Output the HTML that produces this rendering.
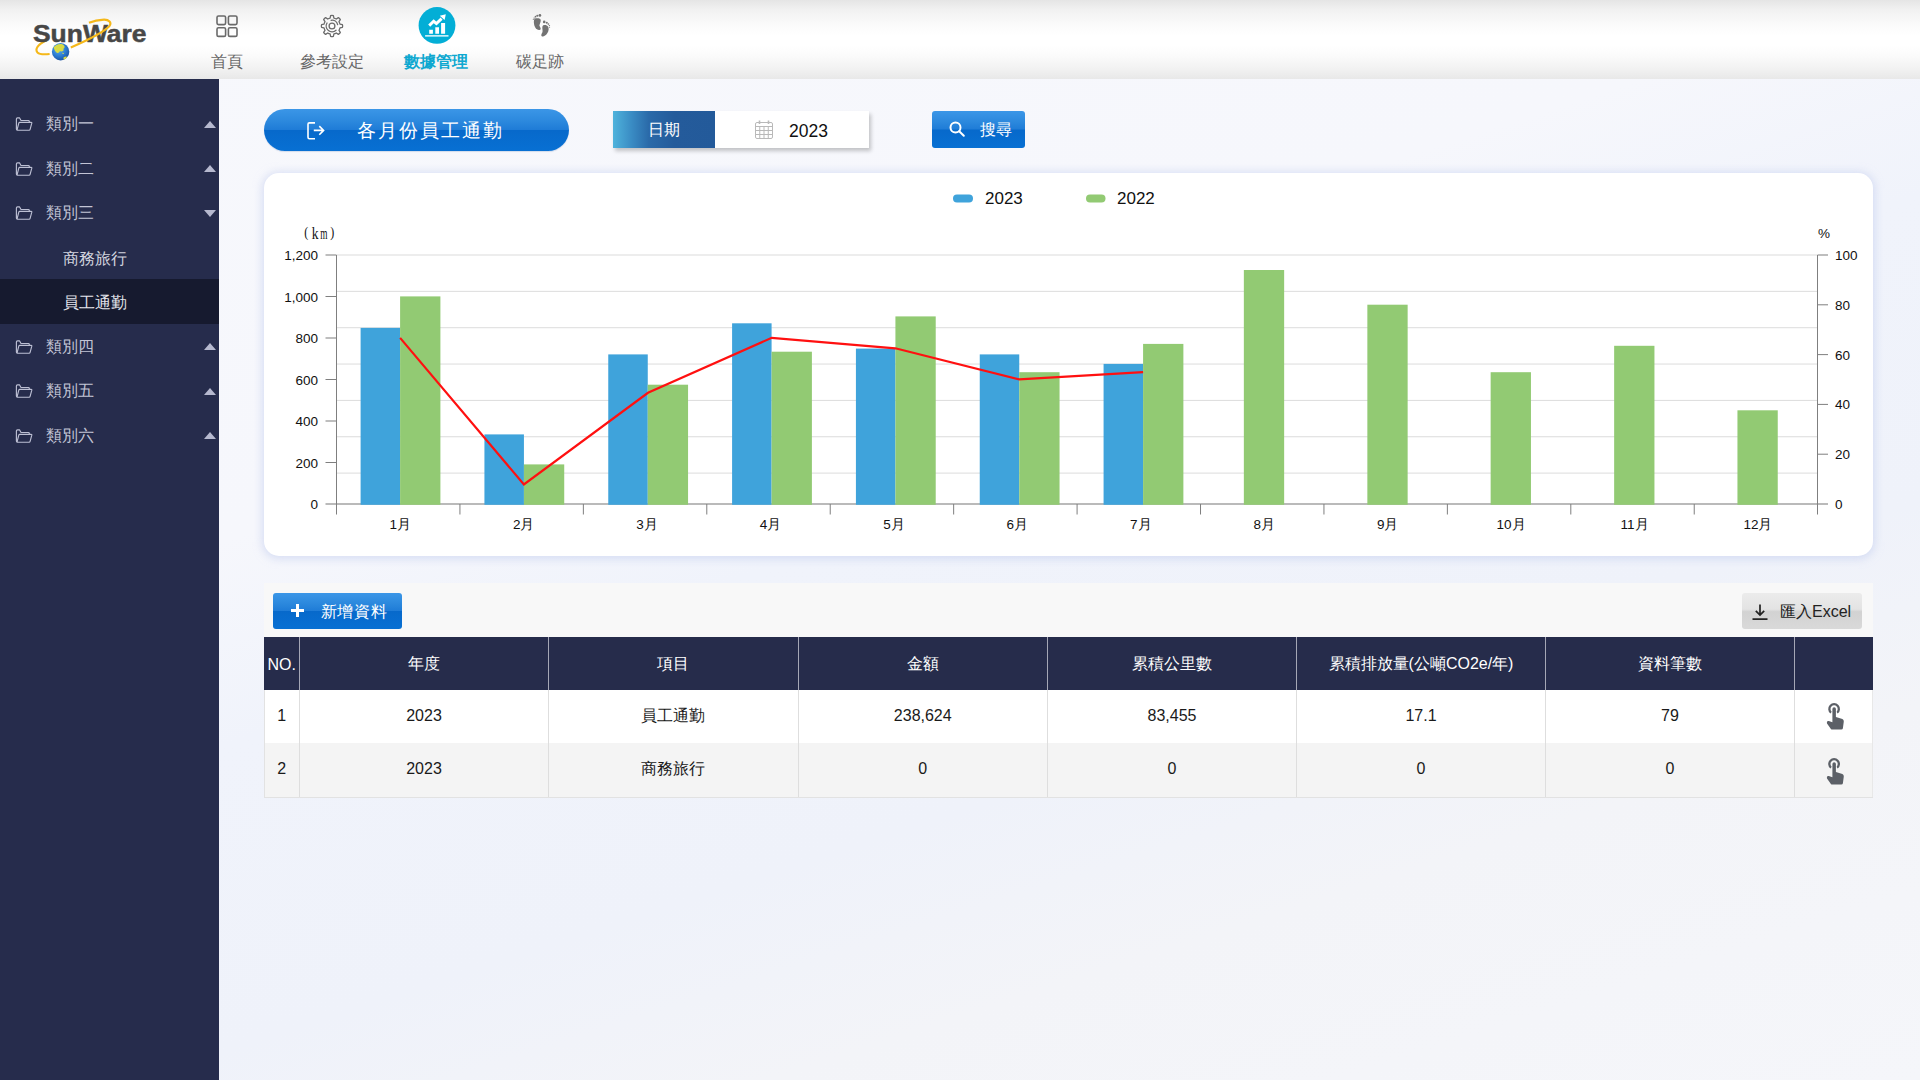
<!DOCTYPE html>
<html><head><meta charset="utf-8">
<style>
*{margin:0;padding:0;box-sizing:border-box}
html,body{width:1920px;height:1080px;overflow:hidden}
body{position:relative;font-family:"Liberation Sans",sans-serif;background:linear-gradient(162deg,#f7f8fc 0%,#f6f7fc 36%,#f0f3fb 48%,#eff2fa 66%,#f3f4f8 78%,#f5f6fa 100%)}
.abs{position:absolute}
#hdr{left:0;top:0;width:1920px;height:78.5px;background:linear-gradient(#e5e5e5 0%,#f1f1f1 12%,#fbfbfb 32%,#ffffff 45%,#ffffff 58%,#fafafa 72%,#f1f1f1 88%,#e8e8e8 100%)}
.nav{position:absolute;top:0;height:79px;text-align:center;font-size:16px;color:#666}
.nav .lbl{position:absolute;left:0;right:0;top:51px;line-height:22px;white-space:nowrap}
#side{left:0;top:78.5px;width:219.3px;height:1001.5px;background:#262c4c}
#side .it{position:absolute;left:0;width:219px;height:44.5px;color:#c2c4d5;font-size:16px}
#side .it .t{position:absolute;left:46px;top:12px;line-height:22px;white-space:nowrap}
#side .sub .t{left:63px;top:13px;color:#d2d4df}
#side .act .t{color:#e4e5ec}
#side .act{background:#161a2f}
#side .fold{position:absolute;left:15px;top:16px}
#side .tri{position:absolute;left:203.5px;top:19.5px;width:0;height:0;border-left:6px solid transparent;border-right:6px solid transparent}
#side .up{border-bottom:7px solid #b6b9cf}
#side .dn{border-top:7px solid #b6b9cf;top:20px}

.gbtn{background:linear-gradient(#3b96e7 0%,#2b88dd 30%,#1f7cd7 49%,#0769cb 51%,#0870d3 100%)}
#ttl{left:264px;top:109px;width:305px;height:42px;border-radius:21px;color:#fff;font-size:19px;box-shadow:0 1px 1px rgba(0,60,140,.15)}
#ttl .t{position:absolute;left:357px;top:10px;line-height:24px;letter-spacing:2px;white-space:nowrap}
#datebox{left:613px;top:111px;width:256px;height:37px;background:#fff;box-shadow:2px 3px 4px rgba(0,0,0,.22)}
#datelbl{left:0;top:0;width:102px;height:37px;background:linear-gradient(90deg,#4fb3dc 0%,#3a8cc4 18%,#2a6aa9 35%,#245b9b 60%,#235a9a 100%);color:#fff;font-size:16px;text-align:center;line-height:37px}
#search{left:932px;top:111px;width:93px;height:37px;border-radius:3px;color:#fff;font-size:16px}

#chartp{left:264px;top:173px;width:1609px;height:383px;background:#fff;border-radius:15px;box-shadow:0 1px 8px 2px rgba(195,205,238,.6)}

#tblp{left:264px;top:583px;width:1609px;height:214px;background:#f8f8f8}
.gbtn2{background:linear-gradient(#3b96e7 0%,#2b88dd 30%,#1f7cd7 49%,#0769cb 51%,#0870d3 100%)}
#addbtn{left:273px;top:593px;width:129px;height:36px;border-radius:3px;color:#fff;font-size:16px}
#xlsbtn{left:1742px;top:593px;width:120px;height:36px;border-radius:3px;color:#222;font-size:16px;background:linear-gradient(#ebebeb 0%,#e3e3e3 45%,#d2d2d2 52%,#d9d9d9 100%)}
.row{position:absolute;left:264px;width:1609px}
.cell{position:absolute;top:0;height:100%;text-align:center;white-space:nowrap}
.hdr{top:637px;height:52.5px;background:#262c4b;color:#fff;font-size:16px}
.hdr .cell{line-height:52.5px;top:1px;font-weight:500}
.hdr .cell:first-child{top:2px}
.r1{top:689.5px;height:53.5px;background:#fff;color:#1a1a1a;font-size:16px}
.r2{top:743px;height:53.5px;background:#f4f4f4;color:#1a1a1a;font-size:16px}
.r1 .cell,.r2 .cell{line-height:53.5px;top:-1px;font-weight:500}
.vl{position:absolute;top:0;width:1px;height:100%}
</style></head>
<body>
<div id="hdr" class="abs"></div>
<!-- logo -->
<svg class="abs" style="left:0;top:0" width="200" height="79" viewBox="0 0 200 79">
  <defs><radialGradient id="gl" cx="0.4" cy="0.35" r="0.7"><stop offset="0" stop-color="#5fb0f0"/><stop offset="0.6" stop-color="#2a7ad0"/><stop offset="1" stop-color="#1a4fa0"/></radialGradient></defs>
  <path d="M46.5 40.3 C 38 44.5, 34.5 49, 37.5 52.5 C 39.5 54.5, 45 54.5, 49.6 54" stroke="#f5b81a" stroke-width="2.1" fill="none"/>
  <text x="33" y="41.8" font-family="Liberation Sans" font-weight="bold" font-size="24.5" fill="#474747" stroke="#474747" stroke-width="0.5" textLength="113.5" lengthAdjust="spacingAndGlyphs">SunWare</text>
  <path d="M70.8 47.5 C 88 40, 104 32, 109.5 26 C 112 22.5, 109 19.5, 104 19.6 C 98 19.8, 92 21.5, 89 22.8" stroke="#f5b81a" stroke-width="2.1" fill="none"/>
  <circle cx="60.6" cy="51.7" r="8.7" fill="url(#gl)"/>
  <path d="M53.5 47.5 q3 -4 8 -3.5 q3.5 1 3 3.5 q-1.5 1 -1 3 q-2 1.5 -3.5 0.5 q-1 2.5 -3 2 q-2.5 -2 -3.5 -5.5z" fill="#d9dc45"/>
  <path d="M63.5 57.5 q2.5 -1.5 3.5 -0.5 q-1 2 -3.5 2.5z" fill="#d9dc45"/>
  <path d="M62 53 q1.5 -0.5 2 0.8 q-1 0.8 -2 -0.8z" fill="#d9dc45"/>
</svg>
<!-- nav -->
<div class="nav" style="left:197px;width:60px">
  <svg class="abs" style="left:19px;top:14.8px" width="23" height="23" viewBox="0 0 23 23" fill="none" stroke="#6a6a6a" stroke-width="1.6">
    <rect x="1" y="1" width="8.6" height="8.6" rx="1.5"/><rect x="12.4" y="1" width="8.6" height="8.6" rx="1.5"/>
    <rect x="1" y="12.8" width="8.6" height="8.6" rx="1.5"/><rect x="12.4" y="12.8" width="8.6" height="8.6" rx="1.5"/>
  </svg>
  <div class="lbl">首頁</div>
</div>
<div class="nav" style="left:292px;width:80px">
  <svg class="abs" style="left:24px;top:9.6px" width="32" height="32" viewBox="0 0 32 32" fill="none" stroke="#6a6a6a" stroke-width="1.3" stroke-linejoin="round" stroke-linecap="round">
    <path d="M14.09 8.03 L14.63 5.59 Q16.00 5.08 17.37 5.59 L17.91 8.03 A8.2 8.2 0 0 1 20.28 9.01 L22.39 7.67 Q23.72 8.28 24.33 9.61 L22.99 11.72 A8.2 8.2 0 0 1 23.97 14.09 L26.41 14.63 Q26.92 16.00 26.41 17.37 L23.97 17.91 A8.2 8.2 0 0 1 22.99 20.28 L24.33 22.39 Q23.72 23.72 22.39 24.33 L20.28 22.99 A8.2 8.2 0 0 1 17.91 23.97 L17.37 26.41 Q16.00 26.92 14.63 26.41 L14.09 23.97 A8.2 8.2 0 0 1 11.72 22.99 L9.61 24.33 Q8.28 23.72 7.67 22.39 L9.01 20.28 A8.2 8.2 0 0 1 8.03 17.91 L5.59 17.37 Q5.08 16.00 5.59 14.63 L8.03 14.09 A8.2 8.2 0 0 1 9.01 11.72 L7.67 9.61 Q8.28 8.28 9.61 7.67 L11.72 9.01 A8.2 8.2 0 0 1 14.09 8.03 Z"/>
    <circle cx="16" cy="16" r="2.9"/><path d="M15.09 10.27 A5.8 5.8 0 0 1 21.63 14.60"/><path d="M20.03 20.17 A5.8 5.8 0 0 1 11.03 13.01"/>
  </svg>
  <div class="lbl">參考設定</div>
</div>
<div class="nav" style="left:396px;width:80px">
  <svg class="abs" style="left:21px;top:5px" width="40" height="40" viewBox="0 0 40 40">
    <circle cx="20" cy="20.4" r="18.4" fill="#03aed6"/>
    <path d="M12.2 24.8h3.7v3.9h-3.7zM18.3 22.2h3.7v6.5h-3.7zM24.1 18h4v10.7h-4z" fill="#fff"/>
    <path d="M12.2 20.6 L16.7 16.3 L19.4 18.5 L24.6 13.6" stroke="#fff" stroke-width="2.9" fill="none" stroke-linejoin="miter"/>
    <path d="M22.8 10.7 L28.8 9.2 L27.6 15 Z" fill="#fff"/>
    <rect x="8.1" y="30" width="23.4" height="1.7" fill="#c9eef8"/>
  </svg>
  <div class="lbl" style="color:#0ea8d0;font-weight:bold">數據管理</div>
</div>
<div class="nav" style="left:500px;width:80px">
  <svg class="abs" style="left:26px;top:9px" width="32" height="32" viewBox="0 0 32 32" fill="#737373">
    <path d="M8.9 9.6 C11 9 13.6 8.9 14.6 10.6 C15.2 12 14 14.5 13.4 16.2 C13.2 17.2 14.9 18.6 14.7 19.9 C14.5 21 12.6 21.2 11.4 20.6 C9.5 19.5 8.1 17 7.9 13.9 C7.8 12 8 10.3 8.9 9.6 Z"/>
    <circle cx="13.9" cy="6.4" r="1.35"/><circle cx="11.3" cy="6.8" r="1.05"/><circle cx="9.5" cy="7.7" r="0.85"/><circle cx="8.1" cy="9.1" r="0.7"/><circle cx="7.3" cy="10.5" r="0.55"/>
    <path d="M17 16.4 C18.5 15.6 21 15.7 22.2 17.8 C23 19.5 22.9 22 21.1 24.6 C19.8 26.5 17.6 28 16 27.4 C14.8 26.9 15.3 25.2 16.2 23.8 C16.9 22.5 16.4 20.5 16.3 19 C16.3 17.8 16.5 16.8 17 16.4 Z"/>
    <circle cx="18.2" cy="12.9" r="1.3"/><circle cx="20.8" cy="13.7" r="1.05"/><circle cx="22.4" cy="15" r="0.85"/><circle cx="23.4" cy="16.6" r="0.7"/><circle cx="23.6" cy="18.2" r="0.55"/>
  </svg>
  <div class="lbl">碳足跡</div>
</div>

<!-- sidebar -->
<div id="side" class="abs">
<div class="it" style="top:22.60px"><svg class="fold" width="18" height="15" viewBox="0 0 18 15" fill="none" stroke="#bcbfd3" stroke-width="1.15" stroke-linejoin="round"><path d="M2.5 13.2 Q1.4 13.2 1.4 12 V2 Q1.4 0.9 2.5 0.9 H4.6 L6 3.5 H13.4 Q14.3 3.5 14.3 4.4 V5.4"/><path d="M4.8 5.4 H16.2 Q17 5.4 16.8 6.2 L15.1 12.4 Q14.9 13.2 14.1 13.2 H2.8 Q2 13.2 2.2 12.4 L3.8 6.2 Q4 5.4 4.8 5.4Z"/></svg><div class="t">類別一</div><div class="tri up"></div></div>
<div class="it" style="top:67.12px"><svg class="fold" width="18" height="15" viewBox="0 0 18 15" fill="none" stroke="#bcbfd3" stroke-width="1.15" stroke-linejoin="round"><path d="M2.5 13.2 Q1.4 13.2 1.4 12 V2 Q1.4 0.9 2.5 0.9 H4.6 L6 3.5 H13.4 Q14.3 3.5 14.3 4.4 V5.4"/><path d="M4.8 5.4 H16.2 Q17 5.4 16.8 6.2 L15.1 12.4 Q14.9 13.2 14.1 13.2 H2.8 Q2 13.2 2.2 12.4 L3.8 6.2 Q4 5.4 4.8 5.4Z"/></svg><div class="t">類別二</div><div class="tri up"></div></div>
<div class="it" style="top:111.64px"><svg class="fold" width="18" height="15" viewBox="0 0 18 15" fill="none" stroke="#bcbfd3" stroke-width="1.15" stroke-linejoin="round"><path d="M2.5 13.2 Q1.4 13.2 1.4 12 V2 Q1.4 0.9 2.5 0.9 H4.6 L6 3.5 H13.4 Q14.3 3.5 14.3 4.4 V5.4"/><path d="M4.8 5.4 H16.2 Q17 5.4 16.8 6.2 L15.1 12.4 Q14.9 13.2 14.1 13.2 H2.8 Q2 13.2 2.2 12.4 L3.8 6.2 Q4 5.4 4.8 5.4Z"/></svg><div class="t">類別三</div><div class="tri dn"></div></div>
<div class="it sub" style="top:156.16px"><div class="t">商務旅行</div></div>
<div class="it sub act" style="top:200.68px"><div class="t">員工通勤</div></div>
<div class="it" style="top:245.20px"><svg class="fold" width="18" height="15" viewBox="0 0 18 15" fill="none" stroke="#bcbfd3" stroke-width="1.15" stroke-linejoin="round"><path d="M2.5 13.2 Q1.4 13.2 1.4 12 V2 Q1.4 0.9 2.5 0.9 H4.6 L6 3.5 H13.4 Q14.3 3.5 14.3 4.4 V5.4"/><path d="M4.8 5.4 H16.2 Q17 5.4 16.8 6.2 L15.1 12.4 Q14.9 13.2 14.1 13.2 H2.8 Q2 13.2 2.2 12.4 L3.8 6.2 Q4 5.4 4.8 5.4Z"/></svg><div class="t">類別四</div><div class="tri up"></div></div>
<div class="it" style="top:289.72px"><svg class="fold" width="18" height="15" viewBox="0 0 18 15" fill="none" stroke="#bcbfd3" stroke-width="1.15" stroke-linejoin="round"><path d="M2.5 13.2 Q1.4 13.2 1.4 12 V2 Q1.4 0.9 2.5 0.9 H4.6 L6 3.5 H13.4 Q14.3 3.5 14.3 4.4 V5.4"/><path d="M4.8 5.4 H16.2 Q17 5.4 16.8 6.2 L15.1 12.4 Q14.9 13.2 14.1 13.2 H2.8 Q2 13.2 2.2 12.4 L3.8 6.2 Q4 5.4 4.8 5.4Z"/></svg><div class="t">類別五</div><div class="tri up"></div></div>
<div class="it" style="top:334.24px"><svg class="fold" width="18" height="15" viewBox="0 0 18 15" fill="none" stroke="#bcbfd3" stroke-width="1.15" stroke-linejoin="round"><path d="M2.5 13.2 Q1.4 13.2 1.4 12 V2 Q1.4 0.9 2.5 0.9 H4.6 L6 3.5 H13.4 Q14.3 3.5 14.3 4.4 V5.4"/><path d="M4.8 5.4 H16.2 Q17 5.4 16.8 6.2 L15.1 12.4 Q14.9 13.2 14.1 13.2 H2.8 Q2 13.2 2.2 12.4 L3.8 6.2 Q4 5.4 4.8 5.4Z"/></svg><div class="t">類別六</div><div class="tri up"></div></div>
</div>


<!-- title button -->
<div id="ttl" class="abs gbtn">
  <svg class="abs" style="left:43px;top:13px" width="19" height="18" viewBox="0 0 19 18" fill="none" stroke="#fff" stroke-width="1.6">
    <path d="M8 0.9H2.4Q1 0.9 1 2.3V15.3Q1 16.7 2.4 16.7H8"/><path d="M6.8 8.4H16.6M12.3 4.1L16.6 8.4L12.3 12.7"/>
  </svg>
  <div class="t" style="left:93px">各月份員工通勤</div>
</div>
<!-- date -->
<div id="datebox" class="abs">
  <div id="datelbl" class="abs">日期</div>
  <svg class="abs" style="left:142px;top:9px" width="18" height="19" viewBox="0 0 18 19" fill="none" stroke="#b9b9b9" stroke-width="1">
    <rect x="0.5" y="2.5" width="17" height="16" rx="1.5"/>
    <path d="M0.5 6.5H17.5M0.5 10.5H17.5M0.5 14.5H17.5M4.75 6.5V18.5M9 6.5V18.5M13.25 6.5V18.5"/>
    <path d="M4.5 0.5V4M13.5 0.5V4" stroke-width="1.6"/>
  </svg>
  <div class="abs" style="left:176px;top:1.5px;line-height:37px;font-size:17.5px;color:#111">2023</div>
</div>
<!-- search -->
<div id="search" class="abs gbtn">
  <svg class="abs" style="left:17px;top:10px" width="17" height="17" viewBox="0 0 17 17" fill="none" stroke="#fff" stroke-width="2">
    <circle cx="6.5" cy="6.5" r="5"/><path d="M10.2 10.2L14.8 14.8" stroke-linecap="round"/>
  </svg>
  <div class="abs" style="left:48px;top:0;line-height:37px">搜尋</div>
</div>
<div id="chartp" class="abs"></div>
<!--CHART-->
<svg class="abs" style="left:0;top:0" width="1920" height="1080" viewBox="0 0 1920 1080">
<rect x="337" y="254.50" width="1480" height="1" fill="#dcdcdc"/>
<rect x="337" y="290.85" width="1480" height="1" fill="#dcdcdc"/>
<rect x="337" y="327.20" width="1480" height="1" fill="#dcdcdc"/>
<rect x="337" y="363.55" width="1480" height="1" fill="#dcdcdc"/>
<rect x="337" y="399.90" width="1480" height="1" fill="#dcdcdc"/>
<rect x="337" y="436.25" width="1480" height="1" fill="#dcdcdc"/>
<rect x="337" y="472.60" width="1480" height="1" fill="#dcdcdc"/>
<rect x="325.5" y="503" width="1502.5" height="2" fill="#bababa"/>
<rect x="336" y="255" width="1" height="259.5" fill="#7f7f7f"/>
<rect x="1817" y="255" width="1" height="259.5" fill="#7f7f7f"/>
<rect x="325.5" y="254.50" width="11" height="1" fill="#7f7f7f"/>
<rect x="325.5" y="296.00" width="11" height="1" fill="#7f7f7f"/>
<rect x="325.5" y="337.50" width="11" height="1" fill="#7f7f7f"/>
<rect x="325.5" y="379.00" width="11" height="1" fill="#7f7f7f"/>
<rect x="325.5" y="420.50" width="11" height="1" fill="#7f7f7f"/>
<rect x="325.5" y="462.00" width="11" height="1" fill="#7f7f7f"/>
<rect x="1817.5" y="254.50" width="10.5" height="1" fill="#7f7f7f"/>
<rect x="1817.5" y="304.30" width="10.5" height="1" fill="#7f7f7f"/>
<rect x="1817.5" y="354.10" width="10.5" height="1" fill="#7f7f7f"/>
<rect x="1817.5" y="403.90" width="10.5" height="1" fill="#7f7f7f"/>
<rect x="1817.5" y="453.70" width="10.5" height="1" fill="#7f7f7f"/>
<rect x="459.43" y="504" width="1" height="10.5" fill="#7f7f7f"/>
<rect x="582.86" y="504" width="1" height="10.5" fill="#7f7f7f"/>
<rect x="706.29" y="504" width="1" height="10.5" fill="#7f7f7f"/>
<rect x="829.72" y="504" width="1" height="10.5" fill="#7f7f7f"/>
<rect x="953.15" y="504" width="1" height="10.5" fill="#7f7f7f"/>
<rect x="1076.58" y="504" width="1" height="10.5" fill="#7f7f7f"/>
<rect x="1200.01" y="504" width="1" height="10.5" fill="#7f7f7f"/>
<rect x="1323.44" y="504" width="1" height="10.5" fill="#7f7f7f"/>
<rect x="1446.87" y="504" width="1" height="10.5" fill="#7f7f7f"/>
<rect x="1570.30" y="504" width="1" height="10.5" fill="#7f7f7f"/>
<rect x="1693.73" y="504" width="1" height="10.5" fill="#7f7f7f"/>
<rect x="360.60" y="327.90" width="39.5" height="176.90" fill="#3fa3db"/>
<rect x="400.10" y="296.40" width="40.3" height="208.40" fill="#92ca73"/>
<rect x="484.43" y="434.40" width="39.5" height="70.40" fill="#3fa3db"/>
<rect x="523.93" y="464.40" width="40.3" height="40.40" fill="#92ca73"/>
<rect x="608.26" y="354.40" width="39.5" height="150.40" fill="#3fa3db"/>
<rect x="647.76" y="384.70" width="40.3" height="120.10" fill="#92ca73"/>
<rect x="732.09" y="323.30" width="39.5" height="181.50" fill="#3fa3db"/>
<rect x="771.59" y="351.70" width="40.3" height="153.10" fill="#92ca73"/>
<rect x="855.92" y="348.60" width="39.5" height="156.20" fill="#3fa3db"/>
<rect x="895.42" y="316.40" width="40.3" height="188.40" fill="#92ca73"/>
<rect x="979.75" y="354.40" width="39.5" height="150.40" fill="#3fa3db"/>
<rect x="1019.25" y="372.20" width="40.3" height="132.60" fill="#92ca73"/>
<rect x="1103.58" y="363.90" width="39.5" height="140.90" fill="#3fa3db"/>
<rect x="1143.08" y="343.90" width="40.3" height="160.90" fill="#92ca73"/>
<rect x="1243.85" y="270.00" width="40.3" height="234.80" fill="#92ca73"/>
<rect x="1367.35" y="304.70" width="40.3" height="200.10" fill="#92ca73"/>
<rect x="1490.65" y="372.20" width="40.3" height="132.60" fill="#92ca73"/>
<rect x="1614.15" y="345.80" width="40.3" height="159.00" fill="#92ca73"/>
<rect x="1737.45" y="410.30" width="40.3" height="94.50" fill="#92ca73"/>
<polyline points="400.1,337.9 523.9,484.4 648,392.8 771.7,337.8 895.3,348.3 1019.2,379.4 1143.1,372.2" fill="none" stroke="#ff1010" stroke-width="2.2" stroke-linejoin="miter"/>
<g font-family="Liberation Sans" font-size="13.5" fill="#111">
<text x="318" y="260.00" text-anchor="end">1,200</text>
<text x="318" y="301.50" text-anchor="end">1,000</text>
<text x="318" y="343.00" text-anchor="end">800</text>
<text x="318" y="384.50" text-anchor="end">600</text>
<text x="318" y="426.00" text-anchor="end">400</text>
<text x="318" y="467.50" text-anchor="end">200</text>
<text x="318" y="509.00" text-anchor="end">0</text>
<text x="1835" y="260.00">100</text>
<text x="1835" y="309.80">80</text>
<text x="1835" y="359.60">60</text>
<text x="1835" y="409.40">40</text>
<text x="1835" y="459.20">20</text>
<text x="1835" y="509.00">0</text>
<text x="400.22" y="529" text-anchor="middle">1月</text>
<text x="523.64" y="529" text-anchor="middle">2月</text>
<text x="647.08" y="529" text-anchor="middle">3月</text>
<text x="770.50" y="529" text-anchor="middle">4月</text>
<text x="893.94" y="529" text-anchor="middle">5月</text>
<text x="1017.37" y="529" text-anchor="middle">6月</text>
<text x="1140.80" y="529" text-anchor="middle">7月</text>
<text x="1264.22" y="529" text-anchor="middle">8月</text>
<text x="1387.65" y="529" text-anchor="middle">9月</text>
<text x="1511.09" y="529" text-anchor="middle">10月</text>
<text x="1634.52" y="529" text-anchor="middle">11月</text>
<text x="1757.95" y="529" text-anchor="middle">12月</text>
<text x="1818" y="238">%</text>
</g>
<g font-family="Liberation Serif" fill="#111"><text x="304.3" y="237" font-size="15" textLength="4" lengthAdjust="spacingAndGlyphs">(</text><text x="311.8" y="238.7" font-size="16.5" textLength="6.8" lengthAdjust="spacingAndGlyphs">k</text><text x="320.2" y="238.7" font-size="16.5" textLength="7.2" lengthAdjust="spacingAndGlyphs">m</text><text x="330.2" y="237" font-size="15" textLength="4" lengthAdjust="spacingAndGlyphs">)</text></g>
<rect x="953" y="194.5" width="20" height="8" rx="4" fill="#3fa3db"/>
<rect x="1086" y="194.5" width="19.5" height="8" rx="4" fill="#92ca73"/>
<g font-family="Liberation Sans" font-size="17" fill="#111"><text x="985" y="204">2023</text><text x="1117" y="204">2022</text></g>
</svg>
<!--/CHART-->
<div id="tblp" class="abs"></div>
<div id="addbtn" class="abs gbtn2">
  <svg class="abs" style="left:18px;top:11px" width="13" height="13" viewBox="0 0 13 13"><path d="M5 0h3v5h5v3H8v5H5V8H0V5h5z" fill="#fff"/></svg>
  <div class="abs" style="left:47.5px;top:1px;line-height:36px;font-weight:500;letter-spacing:0.8px">新增資料</div>
</div>
<div id="xlsbtn" class="abs">
  <svg class="abs" style="left:10px;top:11px" width="16" height="16" viewBox="0 0 16 16" fill="none" stroke="#222" stroke-width="1.7"><path d="M8 0.5V11M3.8 6.8L8 11l4.2-4.2M0.5 15.2H15.5"/></svg>
  <div class="abs" style="left:38px;top:1px;line-height:36px;font-weight:500">匯入Excel</div>
</div>
<div class="row hdr"><div class="cell" style="left:0.00px;width:35.50px">NO.</div><div class="cell" style="left:35.50px;width:249.00px">年度</div><div class="cell" style="left:284.50px;width:249.50px">項目</div><div class="cell" style="left:534.00px;width:249.50px">金額</div><div class="cell" style="left:783.50px;width:249.00px">累積公里數</div><div class="cell" style="left:1032.50px;width:249.00px">累積排放量(公噸CO2e/年)</div><div class="cell" style="left:1281.50px;width:249.00px">資料筆數</div><div class="cell" style="left:1530.50px;width:78.50px"></div><div class="vl" style="left:35.00px;background:#a5a7b5"></div><div class="vl" style="left:284.00px;background:#a5a7b5"></div><div class="vl" style="left:533.50px;background:#a5a7b5"></div><div class="vl" style="left:783.00px;background:#a5a7b5"></div><div class="vl" style="left:1032.00px;background:#a5a7b5"></div><div class="vl" style="left:1281.00px;background:#a5a7b5"></div><div class="vl" style="left:1530.00px;background:#a5a7b5"></div></div>
<div class="row r1"><div class="cell" style="left:0.00px;width:35.50px">1</div><div class="cell" style="left:35.50px;width:249.00px">2023</div><div class="cell" style="left:284.50px;width:249.50px">員工通勤</div><div class="cell" style="left:534.00px;width:249.50px">238,624</div><div class="cell" style="left:783.50px;width:249.00px">83,455</div><div class="cell" style="left:1032.50px;width:249.00px">17.1</div><div class="cell" style="left:1281.50px;width:249.00px">79</div><div class="cell" style="left:1530.50px;width:78.50px"></div><div class="vl" style="left:35.00px;background:#dedede"></div><div class="vl" style="left:284.00px;background:#dedede"></div><div class="vl" style="left:533.50px;background:#dedede"></div><div class="vl" style="left:783.00px;background:#dedede"></div><div class="vl" style="left:1032.00px;background:#dedede"></div><div class="vl" style="left:1281.00px;background:#dedede"></div><div class="vl" style="left:1530.00px;background:#dedede"></div></div>
<div class="row r2"><div class="cell" style="left:0.00px;width:35.50px">2</div><div class="cell" style="left:35.50px;width:249.00px">2023</div><div class="cell" style="left:284.50px;width:249.50px">商務旅行</div><div class="cell" style="left:534.00px;width:249.50px">0</div><div class="cell" style="left:783.50px;width:249.00px">0</div><div class="cell" style="left:1032.50px;width:249.00px">0</div><div class="cell" style="left:1281.50px;width:249.00px">0</div><div class="cell" style="left:1530.50px;width:78.50px"></div><div class="vl" style="left:35.00px;background:#dedede"></div><div class="vl" style="left:284.00px;background:#dedede"></div><div class="vl" style="left:533.50px;background:#dedede"></div><div class="vl" style="left:783.00px;background:#dedede"></div><div class="vl" style="left:1032.00px;background:#dedede"></div><div class="vl" style="left:1281.00px;background:#dedede"></div><div class="vl" style="left:1530.00px;background:#dedede"></div></div>
<div class="abs" style="left:264px;top:796.5px;width:1609px;height:1px;background:#e2e2e2"></div>
<div class="abs" style="left:264px;top:689.5px;width:1px;height:107.5px;background:#e2e2e2"></div>
<div class="abs" style="left:1872px;top:689.5px;width:1px;height:107.5px;background:#e8e8e8"></div>
<svg class="abs" style="left:1815px;top:695px" width="40" height="40" viewBox="0 0 40 40">
  <path d="M16.18 17.64 A4.75 4.75 0 1 1 22.02 17.64" fill="none" stroke="#5c6067" stroke-width="2.3"/>
  <path d="M17.4 20 V14 A1.75 1.75 0 0 1 20.9 14 V20" fill="none" stroke="#fff" stroke-width="1.3"/>
  <path d="M17.4 27.2 V14 A1.75 1.75 0 0 1 20.9 14 V21.9 L27.4 24.1 Q28.9 24.8 28.8 26.5 L27.9 33.3 Q27.7 34.6 26.3 34.6 H17 Q16.4 34.6 15.9 34 L12 28.5 Q11.6 27.6 12.3 26.3 Q12.8 25.8 13.8 26.1 Z" fill="#5c6067"/>
</svg>
<svg class="abs" style="left:1815px;top:749.5px" width="40" height="40" viewBox="0 0 40 40">
  <path d="M16.18 17.64 A4.75 4.75 0 1 1 22.02 17.64" fill="none" stroke="#5c6067" stroke-width="2.3"/>
  <path d="M17.4 20 V14 A1.75 1.75 0 0 1 20.9 14 V20" fill="none" stroke="#fff" stroke-width="1.3"/>
  <path d="M17.4 27.2 V14 A1.75 1.75 0 0 1 20.9 14 V21.9 L27.4 24.1 Q28.9 24.8 28.8 26.5 L27.9 33.3 Q27.7 34.6 26.3 34.6 H17 Q16.4 34.6 15.9 34 L12 28.5 Q11.6 27.6 12.3 26.3 Q12.8 25.8 13.8 26.1 Z" fill="#5c6067"/>
</svg>
</body></html>
